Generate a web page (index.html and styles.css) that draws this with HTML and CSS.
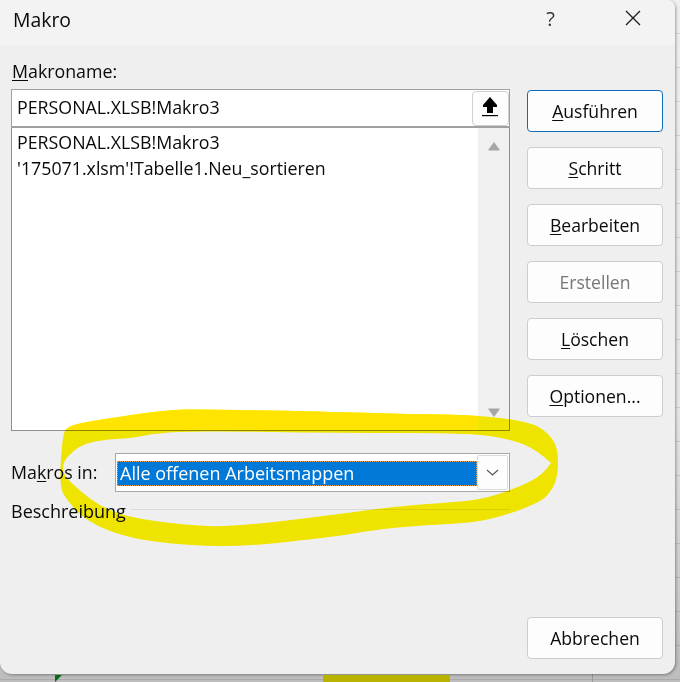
FILE: index.html
```html
<!DOCTYPE html>
<html lang="de">
<head>
<meta charset="utf-8">
<title>Makro</title>
<link rel="stylesheet" href="styles.css">
</head>
<body>
<div class="dialog">
  <header class="titlebar">
    <span class="title">Makro</span>
    <span class="help">?</span>
    <svg class="close" width="16" height="16" viewBox="0 0 16 16"><path d="M1 1L15 15M15 1L1 15" stroke="#1a1a1a" stroke-width="1.3" fill="none"/></svg>
  </header>
  <div class="content">
    <div class="left">
      <div class="label"><u>M</u>akroname:</div>
      <div class="namebox">
        <span class="nametext">PERSONAL.XLSB!Makro3</span>
        <span class="upbtn"><svg class="upicon" width="16" height="20" viewBox="0 0 16 20"><path d="M8 0L15 8V10H11V16H5V10H1V8Z" fill="#000"/><rect x="0" y="18" width="16" height="1.2" fill="#000"/></svg></span>
      </div>
      <div class="list">
        <div class="items">
          <div class="item">PERSONAL.XLSB!Makro3</div>
          <div class="item">'175071.xlsm'!Tabelle1.Neu_sortieren</div>
        </div>
        <div class="scrollbar">
          <svg width="12" height="10" viewBox="0 0 12 10"><path d="M6 1L11.5 8.5V9.5H.5V8.5Z" fill="#a6a6a6"/></svg>
          <svg width="12" height="10" viewBox="0 0 12 10"><path d="M6 9L11.5 1.5V.5H.5V1.5Z" fill="#a6a6a6"/></svg>
        </div>
      </div>
      <div class="inrow">
        <span class="inlabel">Ma<u>k</u>ros in:</span>
        <div class="combo">
          <span class="selected">Alle offenen Arbeitsmappen</span>
          <span class="dropbtn"><svg width="13" height="7" viewBox="0 0 13 7"><path d="M1 1L6.5 6L12 1" stroke="#555" stroke-width="1.1" fill="none"/></svg></span>
        </div>
      </div>
      <div class="descrow">
        <span class="desc">Beschreibung</span>
        <span class="rule"></span>
      </div>
    </div>
    <div class="right">
      <button class="btn default"><u>A</u>usführen</button>
      <button class="btn"><u>S</u>chritt</button>
      <button class="btn"><u>B</u>earbeiten</button>
      <button class="btn disabled">Erstellen</button>
      <button class="btn"><u>L</u>öschen</button>
      <button class="btn"><u>O</u>ptionen...</button>
      <button class="btn cancel">Abbrechen</button>
    </div>
  </div>
</div>
<span class="sheet-tri"></span>
<span class="sheet-fill"></span>
<svg class="scribble" width="680" height="682" viewBox="0 0 680 682">
  <defs>
    <clipPath id="over-list"><rect x="12" y="400" width="466" height="30"/></clipPath>
    <path id="stroke" fill-rule="evenodd" d="M61.5 451.5Q63 433 65.5 430Q68 427 74 425Q80 423 98.5 420Q117 417 142 413.5Q167 410 183.5 409.5Q200 409 270 410.5Q340 412 373.5 413Q407 414 442.5 414.5Q478 415 504 418.5Q530 422 538.5 427Q547 432 552.5 439.5Q558 447 558 462Q558 477 554 485Q550 493 545 497.5Q540 502 523.5 508.5Q507 515 490 519Q473 523 448 524Q423 525 398 527.5Q373 530 356.5 533Q340 536 286.5 542Q233 548 191.5 545Q150 542 130 537Q110 532 96.5 525Q83 518 75 509Q67 500 64 495Q61 490 60.5 480Q60 470 61.5 451.5Z M67.5 457Q72 452 77 448.5Q82 445 91 442.5Q100 440 116.5 439Q133 438 145 435.5Q157 433 178.5 432Q200 431 270 432Q340 433 406.5 433Q473 433 493 436.5Q513 440 525 445Q537 450 551 463Q543 475 530 481.5Q517 488 498.5 494Q480 500 460 501.5Q440 503 415 505Q390 507 365 510.5Q340 514 286.5 520.5Q233 527 208 526Q183 525 155 521Q127 517 113.5 511.5Q100 506 90 498.5Q80 491 71.5 483Q63 475 63 468.5Q63 462 67.5 457Z"/>
  </defs>
  <use href="#stroke" fill="#fff400"/>
  <use href="#stroke" fill="#ffe400" clip-path="url(#over-list)"/>
</svg>
</body>
</html>
```

FILE: styles.css
```css
* { box-sizing: border-box; }
html, body { margin: 0; height: 100%; }
body {
  position: relative;
  width: 680px;
  height: 682px;
  overflow: hidden;
  font-family: "Open Sans", "Noto Sans", sans-serif;
  font-size: 17.8px;
  color: #0a0a0a;
  background:
    linear-gradient(to right, transparent 592px, #9a9a9a 592px, #9a9a9a 593px, transparent 593px),
    repeating-linear-gradient(to bottom, transparent 0, transparent 33px, rgba(0,0,0,.1) 33px, rgba(0,0,0,.1) 34px),
    linear-gradient(to bottom, #efefef 0, #e6e6e6 60%, #bdbdbd 100%);
}
u { text-underline-offset: 2px; text-decoration-thickness: 1px; }
.dialog {
  width: 675px;
  height: 674px;
  background: #efefef;
  border-radius: 0 8px 12px 12px;
  box-shadow: 1px 1px 3px rgba(0,0,0,.35);
  overflow: hidden;
}
.titlebar {
  display: flex;
  align-items: center;
  height: 45px;
  padding: 0 0 6px 13px;
  background: #f3f3f3;
}
.title { font-size: 19.4px; flex: 1; line-height: 36px; }
.help { font-size: 20px; margin-right: 70px; color: #333; line-height: 36px; margin-top: -2px; }
.close { margin-right: 34px; margin-top: -3px; }
.content { display: flex; padding-left: 11px; }
.left { width: 499px; }
.label { height: 44px; padding-top: 14px; line-height: 24px; padding-left: 1px; }
.namebox {
  display: flex;
  justify-content: space-between;
  height: 39px;
  padding: 1px 0 0 5px;
  background: #fff;
  border: 1px solid #a0a0a0;
  border-bottom: 2px solid #a0a0a0;
  line-height: 33px;
}
.upbtn {
  display: flex;
  justify-content: center;
  align-items: center;
  width: 37px;
  height: 35px;
  padding-right: 2px;
  background: #fdfdfd;
  border: 1px solid #d0d0d0;
  border-radius: 4px;
}
.upicon { margin-top: -3px; }
.list {
  display: flex;
  height: 303px;
  background: #fff;
  border: 1px solid #8e8e8e;
  border-top: 0;
}
.items { flex: 1; padding: 1px 0 0 5px; }
.item { line-height: 26px; }
.scrollbar {
  display: flex;
  flex-direction: column;
  justify-content: space-between;
  align-items: center;
  width: 31px;
  padding: 13px 0 12px;
  background: #f0f0f0;
}
.inrow {
  display: flex;
  align-items: center;
  justify-content: space-between;
  margin-top: 22px;
  height: 39px;
}
.inlabel { margin-top: -2px; }
.combo {
  display: flex;
  align-items: center;
  width: 395px;
  height: 39px;
  padding-left: 1px;
  background: #fff;
  border: 1px solid #a8a8a8;
}
.selected {
  flex: 1;
  height: 25px;
  margin-top: 1px;
  padding-left: 3px;
  font-size: 18px;
  line-height: 25px;
  color: #fff;
  background: #0078d7;
  outline: 1px dotted #e8a050;
  outline-offset: -1px;
}
.dropbtn {
  display: flex;
  align-items: center;
  justify-content: center;
  width: 31px;
  height: 35px;
  margin-right: 1px;
  background: #fdfdfd;
  border: 1px solid #dcdcdc;
  border-radius: 2px;
}
.descrow {
  display: flex;
  align-items: center;
  gap: 5px;
  height: 24px;
  margin-top: 7px;
}
.desc { font-size: 18px; }
.rule { flex: 1; height: 1px; margin-top: -3px; background: #dadada; }
.right {
  display: flex;
  flex-direction: column;
  gap: 15px;
  width: 136px;
  margin-left: 17px;
  padding-top: 45px;
}
.btn {
  flex: none;
  height: 42px;
  padding: 0;
  font: inherit;
  font-size: 17.6px;
  color: inherit;
  background: #fdfdfd;
  border: 1px solid #cdcdcd;
  border-radius: 4px;
}
.default { border: 1.5px solid #0f6cbd; }
.disabled { color: #777; }
.cancel { margin-top: 185px; }
.sheet-tri {
  position: absolute;
  left: 55px;
  top: 675px;
  border-top: 7px solid #0a6a16;
  border-right: 7px solid transparent;
}
.sheet-fill {
  position: absolute;
  left: 323px;
  top: 675px;
  width: 127px;
  height: 7px;
  background: #b8b300;
}
.scribble {
  position: absolute;
  left: 0;
  top: 0;
  mix-blend-mode: multiply;
  pointer-events: none;
}
```
